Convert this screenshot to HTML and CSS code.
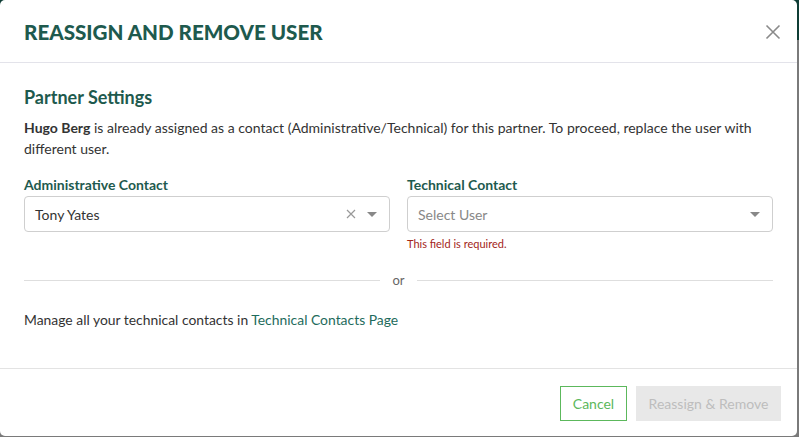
FILE: index.html
```html
<!DOCTYPE html>
<html>
<head>
<meta charset="utf-8">
<link rel="stylesheet" href="styles.css">
</head>
<body>
<div class="modal">
  <div class="modal-header">
    <h1 class="title">REASSIGN AND REMOVE USER</h1>
    <button class="close" aria-label="Close">
      <svg width="16" height="16" viewBox="0 0 16 16"><path d="M1.5 1.5 L14.5 14.5 M14.5 1.5 L1.5 14.5" stroke="#8a8a8a" stroke-width="1.6" fill="none"/></svg>
    </button>
  </div>
  <div class="modal-body">
    <h2 class="section-title">Partner Settings</h2>
    <p class="desc"><b>Hugo Berg</b> is already assigned as a contact (Administrative/Technical) for this partner. To proceed, replace the user with different user.</p>
    <div class="fields">
      <div class="field">
        <label class="label">Administrative Contact</label>
        <div class="select">
          <span class="value">Tony Yates</span>
          <span class="clear"><svg width="10" height="10" viewBox="0 0 10 10"><path d="M1 1 L9 9 M9 1 L1 9" stroke="#999" stroke-width="1.2" fill="none"/></svg></span>
          <span class="caret"></span>
        </div>
      </div>
      <div class="field">
        <label class="label">Technical Contact</label>
        <div class="select">
          <span class="value placeholder">Select User</span>
          <span class="caret"></span>
        </div>
        <div class="error">This field is required.</div>
      </div>
    </div>
    <div class="or-divider"><span class="line"></span><span class="or">or</span><span class="line"></span></div>
    <p class="manage">Manage all your technical contacts in <a href="#">Technical Contacts Page</a></p>
  </div>
  <div class="modal-footer">
    <button class="btn btn-cancel">Cancel</button>
    <button class="btn btn-primary" disabled>Reassign &amp; Remove</button>
  </div>
</div>
</body>
</html>
```
FILE: styles.css
```css
* { box-sizing: border-box; }
html, body { margin: 0; padding: 0; }
body {
  width: 799px;
  height: 437px;
  background: linear-gradient(#0f3d35 0, #0f3d35 40px, #7a7a7a 40px);
  font-family: Lato, "Noto Sans", sans-serif;
  color: #333;
  overflow: hidden;
}
.modal {
  width: 797px;
  height: 436px;
  background: #fff;
  border-radius: 5px;
  display: flex;
  flex-direction: column;
}
.modal-header {
  height: 63px;
  border-bottom: 1px solid #e3e3ea;
  display: flex;
  align-items: center;
  justify-content: space-between;
  padding: 0 16px 0 24px;
}
.title {
  margin: 0;
  font-size: 20.6px;
  font-weight: 900;
  color: #1e5a4e;
  letter-spacing: 0;
  padding-top: 2px;
}
.close {
  border: 0;
  background: none;
  padding: 0;
  width: 16px;
  height: 16px;
  display: flex;
  margin-top: 1px;
}
.modal-body {
  flex: 1;
  padding: 22px 24px 0 24px;
  border-bottom: 1px solid #e3e3e3;
}
.section-title {
  margin: 0;
  font-size: 18px;
  font-weight: 700;
  color: #1e5a4e;
  line-height: 24px;
}
.desc {
  margin: 8px 0 0;
  font-size: 14px;
  line-height: 21px;
  color: #333;
}
.desc b { font-weight: 700; }
.fields {
  display: grid;
  grid-template-columns: 1fr 1fr;
  column-gap: 17px;
  margin-top: 16px;
}
.label {
  display: block;
  font-size: 14px;
  font-weight: 700;
  color: #1e5a4e;
  line-height: 20px;
  margin-bottom: 1px;
}
.select {
  height: 36px;
  border: 1px solid #cfcfcf;
  border-radius: 4px;
  display: flex;
  align-items: center;
  padding: 0 12px 0 10px;
}
.value {
  flex: 1;
  font-size: 14px;
  color: #333;
}
.value.placeholder { color: #888; }
.clear {
  display: flex;
  margin-right: 11px;
}
.caret {
  width: 0;
  height: 0;
  border-left: 5px solid transparent;
  border-right: 5px solid transparent;
  border-top: 5px solid #888;
}
.error {
  font-size: 11px;
  color: #a3261a;
  margin-top: 5px;
  line-height: 14px;
}
.or-divider {
  display: flex;
  align-items: center;
  margin-top: 20px;
  height: 18px;
}
.or-divider .line {
  flex: 1;
  height: 1px;
  background: #dedede;
}
.or {
  font-size: 13px;
  color: #666;
  padding: 0 12px;
  line-height: 18px;
  margin-top: -1px;
}
.manage {
  margin: 21px 0 0;
  font-size: 13.9px;
  color: #333;
  line-height: 20px;
}
.manage a {
  color: #1e6b5c;
  text-decoration: none;
}
.modal-footer {
  height: 67px;
  display: flex;
  justify-content: flex-end;
  align-items: center;
  gap: 9px;
  padding: 2px 16px 0 0;
}
.btn {
  height: 35px;
  font-family: Lato, "Noto Sans", sans-serif;
  font-size: 14px;
  border-radius: 0;
  padding: 0 8px;
  white-space: nowrap;
}
.btn-cancel {
  background: #fff;
  border: 1px solid #5cb85c;
  color: #5cb85c;
  width: 67px;
}
.btn-primary {
  background: #e8e8e8;
  border: 1px solid #e8e8e8;
  color: #bdbdbd;
  width: 145px;
}
```
